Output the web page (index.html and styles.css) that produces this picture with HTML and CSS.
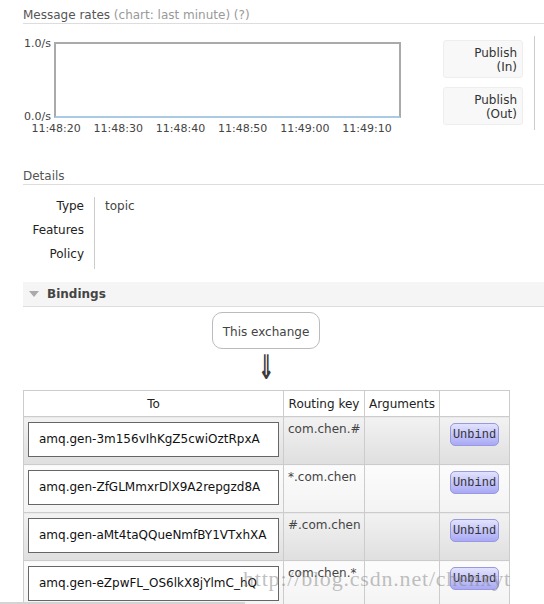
FILE: index.html
```html
<!DOCTYPE html>
<html>
<head>
<meta charset="utf-8">
<link rel="stylesheet" href="styles.css">
</head>
<body>
<div class="page">
  <h2 class="section-title">Message rates <span class="muted">(chart: last minute) (?)</span></h2>
  <div class="rates">
    <div class="chart">
      <div class="plot-row">
        <div class="ylabels"><span>1.0/s</span><span>0.0/s</span></div>
        <div class="plot"></div>
      </div>
      <div class="xlabels">
        <span>11:48:20</span><span>11:48:30</span><span>11:48:40</span><span>11:48:50</span><span>11:49:00</span><span>11:49:10</span>
      </div>
    </div>
    <div class="legend">
      <div class="legend-item">Publish<br>(In)</div>
      <div class="legend-item">Publish<br>(Out)</div>
    </div>
    <div class="vline"></div>
  </div>

  <h2 class="section-title details-title">Details</h2>
  <div class="details">
    <div class="dt">Type</div><div class="dd">topic</div>
    <div class="dt">Features</div><div class="dd"></div>
    <div class="dt">Policy</div><div class="dd"></div>
  </div>

  <div class="bindings-head"><span class="tri"></span>Bindings</div>

  <div class="flow">
    <div class="this-exchange">This exchange</div>
    <div class="arrow">⇓</div>
  </div>

  <table class="bindings">
    <thead>
      <tr><th class="c-to">To</th><th class="c-key">Routing key</th><th class="c-args">Arguments</th><th class="c-act"></th></tr>
    </thead>
    <tbody>
      <tr class="alt1">
        <td><div class="queue">amq.gen-3m156vIhKgZ5cwiOztRpxA</div></td>
        <td><div class="key">com.chen.#</div></td><td></td>
        <td class="act"><button class="unbind">Unbind</button></td>
      </tr>
      <tr class="alt2">
        <td><div class="queue">amq.gen-ZfGLMmxrDlX9A2repgzd8A</div></td>
        <td><div class="key">*.com.chen</div></td><td></td>
        <td class="act"><button class="unbind">Unbind</button></td>
      </tr>
      <tr class="alt1">
        <td><div class="queue">amq.gen-aMt4taQQueNmfBY1VTxhXA</div></td>
        <td><div class="key">#.com.chen</div></td><td></td>
        <td class="act"><button class="unbind">Unbind</button></td>
      </tr>
      <tr class="alt2">
        <td><div class="queue">amq.gen-eZpwFL_OS6lkX8jYlmC_hQ</div></td>
        <td><div class="key">com.chen.*</div></td><td></td>
        <td class="act"><button class="unbind">Unbind</button></td>
      </tr>
    </tbody>
  </table>
</div>
<div class="watermark">http://blog.csdn.net/chenxyt</div>
<div class="scrollbar-edge"></div>
</body>
</html>
```
FILE: styles.css
```css
html, body {
  margin: 0;
  padding: 0;
  background: #fff;
}
body {
  font-family: "DejaVu Sans", Verdana, sans-serif;
  font-size: 12px;
  color: #444;
  overflow: hidden;
  position: relative;
  width: 544px;
  height: 604px;
}
.page {
  padding-left: 23px;
}
.section-title {
  margin: 0;
  padding-top: 7px;
  font-size: 12px;
  font-weight: normal;
  line-height: 16px;
  color: #555;
  border-bottom: 1px solid #ddd;
}
.muted {
  color: #999;
}
.rates {
  display: flex;
  margin-top: 12px;
  height: 98px;
}
.chart {
  margin-top: 6px;
  width: 380px;
}
.plot-row {
  display: flex;
}
.ylabels {
  width: 28px;
  padding-right: 3px;
  margin: -4px 0 -5px;
  display: flex;
  flex-direction: column;
  justify-content: space-between;
  text-align: right;
  font-size: 11px;
  line-height: 12px;
  color: #444;
}
.plot {
  width: 343px;
  height: 72px;
  border: 2px solid #aaa;
  border-bottom-color: #a9cbe6;
}
.xlabels {
  display: flex;
  padding-left: 2px;
  margin-top: 4px;
  font-size: 11px;
  line-height: 13px;
  color: #444;
}
.xlabels span {
  width: 62.2px;
  text-align: center;
  flex: none;
}
.legend {
  margin-left: 40px;
  padding-top: 4px;
  display: flex;
  flex-direction: column;
  gap: 9px;
}
.legend-item {
  width: 70px;
  height: 28px;
  padding: 5px 5px 3px 3px;
  background: #f8f8f8;
  border: 1px solid #eee;
  border-radius: 3px;
  text-align: right;
  line-height: 14px;
  color: #333;
}
.vline {
  margin-left: 11px;
  width: 1px;
  height: 94px;
  background: #ccc;
}
.details-title {
  margin-top: 27px;
}
.details {
  display: grid;
  grid-template-columns: 72px 1fr;
  margin-top: 12px;
  line-height: 16px;
}
.dt {
  text-align: right;
  padding: 1px 10px 7px 0;
  border-right: 1px solid #ccc;
  color: #222;
}
.dd {
  padding: 1px 0 7px 10px;
}
.bindings-head {
  margin-top: 13px;
  height: 24px;
  line-height: 24px;
  background: #f5f5f5;
  border-bottom: 1px solid #ddd;
  font-weight: bold;
  color: #444;
  display: flex;
  align-items: center;
}
.tri {
  width: 0;
  height: 0;
  margin-left: 6px;
  margin-right: 8px;
  border-left: 5.5px solid transparent;
  border-right: 5.5px solid transparent;
  border-top: 6px solid #aaa;
}
.flow {
  width: 486px;
  display: flex;
  flex-direction: column;
  align-items: center;
}
.this-exchange {
  margin-top: 5px;
  width: 106px;
  height: 35px;
  line-height: 38px;
  text-align: center;
  border: 1px solid #bbb;
  border-radius: 10px;
  color: #444;
}
.arrow {
  margin-top: 7px;
  height: 22px;
  line-height: 22px;
  font-size: 34px;
  font-weight: bold;
  color: #3a3a3a;
  margin-bottom: 12px;
  transform: scaleX(0.58);
}
.bindings {
  border-collapse: collapse;
  width: 486px;
  table-layout: fixed;
}
.bindings th, .bindings td {
  border: 1px solid #ccc;
  padding: 0;
}
.bindings th {
  height: 25px;
  font-weight: normal;
  color: #222;
  text-align: center;
  background: #fff;
}
.c-to { width: 259px; }
.c-key { width: 80px; }
.c-args { width: 74px; }
.c-act { width: 69px; }
.bindings tbody tr {
  height: 48px;
}
.bindings td {
  vertical-align: top;
}
.alt1 td {
  background: linear-gradient(#f2f2f2, #dfdfdf);
}
.alt2 td {
  background: linear-gradient(#fcfcfc, #f3f3f3);
}
.queue {
  margin: 5px 4px 0 4px;
  height: 33px;
  line-height: 33px;
  padding-left: 10px;
  background: #fff;
  border: 1px solid #666;
  color: #111;
  white-space: nowrap;
  overflow: hidden;
}
.key {
  padding: 4px 0 0 4px;
  line-height: 16px;
  color: #444;
}
.act {
  text-align: center;
}
.unbind {
  margin-top: 6px;
  width: 49px;
  height: 23px;
  padding: 0;
  font-family: "Liberation Mono", "DejaVu Sans Mono", monospace;
  font-size: 12px;
  color: #333;
  background: linear-gradient(#e2e2ff, #a9a9f5);
  border: 1px solid #9999dd;
  border-radius: 5px;
}
.watermark {
  position: absolute;
  left: 243px;
  top: 566px;
  font-family: "Liberation Serif", serif;
  font-size: 22px;
  letter-spacing: 0.8px;
  color: rgba(130, 130, 130, 0.5);
  white-space: nowrap;
  pointer-events: none;
}
.scrollbar-edge {
  position: absolute;
  left: 0;
  top: 602px;
  width: 245px;
  height: 2px;
  background: #d4d4d4;
}
```
